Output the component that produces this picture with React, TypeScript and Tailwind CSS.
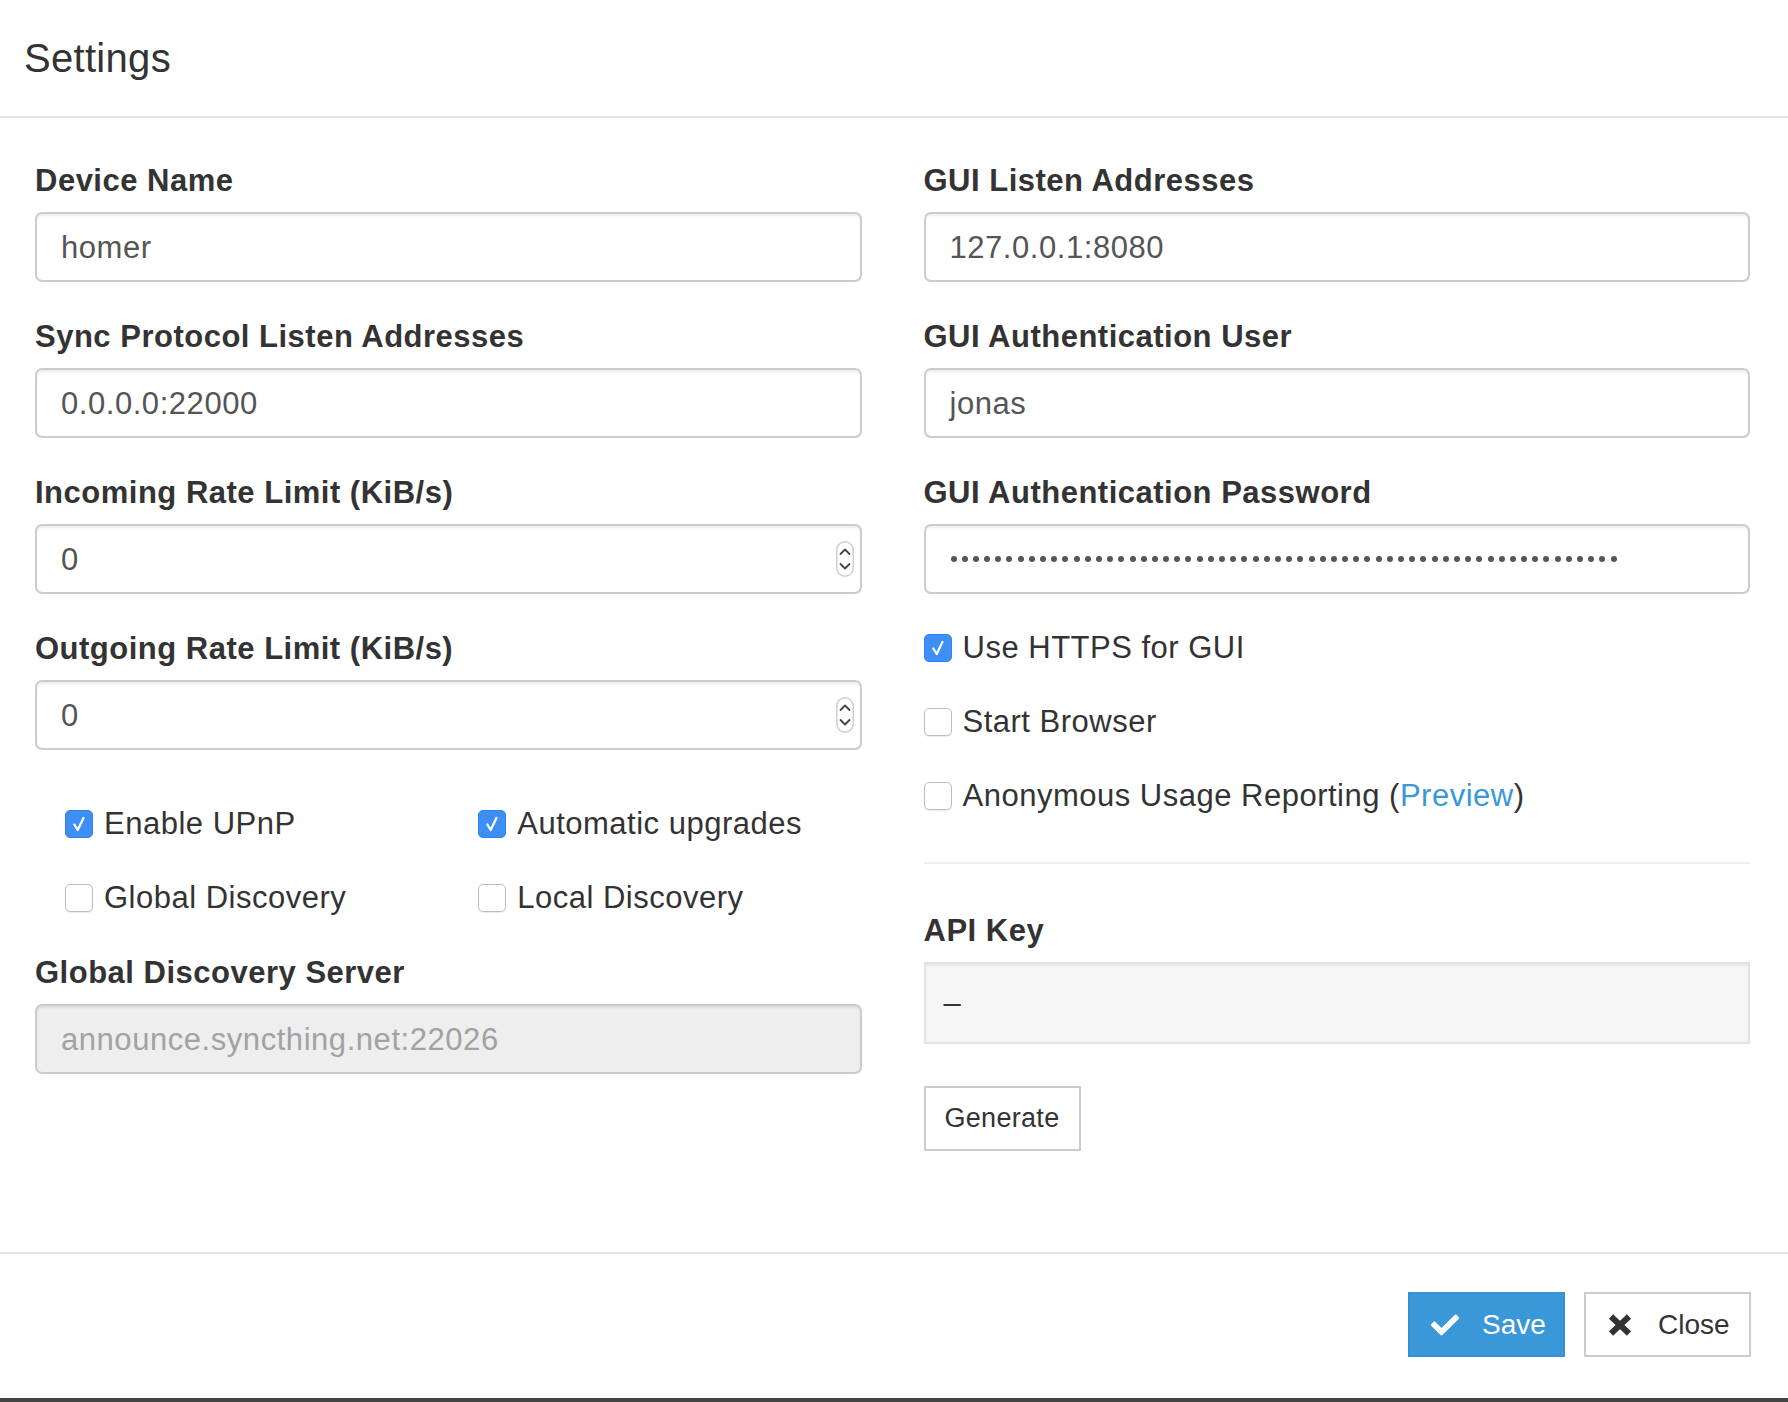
import React from "react";
import { FaCheck } from "react-icons/fa";

const Label = ({ children, className = "" }: { children: React.ReactNode; className?: string }) => (
  <div className={`text-[31px] font-bold leading-[42px] tracking-[0.5px] text-[#333] mb-[10px] ${className}`}>{children}</div>
);

const Spinner = () => (
  <svg width="18" height="36" viewBox="0 0 18 36" className="absolute right-[6px] top-1/2 -translate-y-1/2">
    <rect x="0.75" y="0.75" width="16.5" height="34.5" rx="8.25" fill="#fff" stroke="#cfcfcf" strokeWidth="1.5" />
    <path d="M4.5 13 L9 8.5 L13.5 13" fill="none" stroke="#444" strokeWidth="1.8" strokeLinecap="round" strokeLinejoin="round" />
    <path d="M4.5 23 L9 27.5 L13.5 23" fill="none" stroke="#444" strokeWidth="1.8" strokeLinecap="round" strokeLinejoin="round" />
  </svg>
);

const Input = ({ value, spinner, children }: { value?: string; spinner?: boolean; children?: React.ReactNode }) => (
  <div className="relative h-[70px] rounded-[7px] border-2 border-[#cccccc] bg-white shadow-[inset_0_2px_2px_rgba(0,0,0,0.07)] flex items-center pl-[24px] pt-[3px] text-[31px] tracking-[0.55px] text-[#555]">
    {value}
    {children}
    {spinner && <Spinner />}
  </div>
);

const Group = ({ label, value, spinner, mb = "mb-[34px]" }: { label: string; value: string; spinner?: boolean; mb?: string }) => (
  <div className={mb}>
    <Label>{label}</Label>
    <Input value={value} spinner={spinner} />
  </div>
);

const Box = ({ checked }: { checked: boolean }) =>
  checked ? (
    <span className="w-[28px] h-[28px] rounded-[5px] bg-[#3d8ff5] border border-[#3584ea] flex items-center justify-center shrink-0">
      <svg width="28" height="28" viewBox="0 0 28 28">
        <path d="M9 14.5 L12.6 20.5 L18.8 7.5" fill="none" stroke="#fff" strokeWidth="2.4" strokeLinecap="round" strokeLinejoin="round" />
      </svg>
    </span>
  ) : (
    <span className="w-[28px] h-[28px] rounded-[5px] bg-white border-[1.5px] border-[#bdbdbd] shadow-[0_1px_1px_rgba(0,0,0,0.08)] shrink-0" />
  );

const Check = ({ checked, children, className = "" }: { checked: boolean; children: React.ReactNode; className?: string }) => (
  <div className={`h-[44px] flex items-center gap-[11px] text-[31px] leading-[44px] tracking-[0.5px] text-[#333] ${className}`}>
    <Box checked={checked} />
    <span>{children}</span>
  </div>
);

export default function App() {
  const dots = Array.from({ length: 60 });
  return (
    <div className="w-full h-[1402px] flex flex-col bg-white font-['Liberation_Sans',Arial,sans-serif] text-[#333]">
      <div className="h-[118px] border-b-2 border-[#e5e5e5] pt-[35px] pl-[24px] shrink-0">
        <div className="text-[40px] leading-[46px] tracking-[0.3px] text-[#333]">Settings</div>
      </div>

      <div className="flex-1 grid grid-cols-2 gap-x-[62px] pl-[35px] pr-[38px] pt-[42px] content-start">
        <div className="flex flex-col">
          <Group label="Device Name" value="homer" />
          <Group label="Sync Protocol Listen Addresses" value="0.0.0.0:22000" />
          <Group label="Incoming Rate Limit (KiB/s)" value="0" spinner />
          <Group label="Outgoing Rate Limit (KiB/s)" value="0" spinner mb="mb-[52px]" />
          <div className="grid grid-cols-2 gap-y-[30px]">
            <Check checked className="pl-[30px]">Enable UPnP</Check>
            <Check checked className="pl-[30px]">Automatic upgrades</Check>
            <Check checked={false} className="pl-[30px]">Global Discovery</Check>
            <Check checked={false} className="pl-[30px]">Local Discovery</Check>
          </div>
          <div className="mt-[32px]">
            <Label>Global Discovery Server</Label>
            <div className="h-[70px] rounded-[7px] border-2 border-[#cccccc] bg-[#eeeeee] shadow-[inset_0_2px_2px_rgba(0,0,0,0.07)] flex items-center pl-[24px] pt-[3px] text-[31px] tracking-[0.55px] text-[#a2a2a2]">
              announce.syncthing.net:22026
            </div>
          </div>
        </div>

        <div className="flex flex-col">
          <Group label="GUI Listen Addresses" value="127.0.0.1:8080" />
          <Group label="GUI Authentication User" value="jonas" />
          <div className="mb-[32px]">
            <Label>GUI Authentication Password</Label>
            <Input>
              <div className="flex items-center gap-[5.2px] pl-[1px] -mt-[3px]">
                {dots.map((_, i) => (
                  <span key={i} className="w-[6px] h-[6px] rounded-full bg-[#555]" />
                ))}
              </div>
            </Input>
          </div>
          <div className="flex flex-col gap-y-[30px]">
            <Check checked>Use HTTPS for GUI</Check>
            <Check checked={false}>Start Browser</Check>
            <Check checked={false}>
              Anonymous Usage Reporting (<span className="text-[#3a97d8]">Preview</span>)
            </Check>
          </div>
          <div className="mt-[44px] h-[2px] bg-[#eeeeee]" />
          <Label className="mt-[46px] mb-[9px]">API Key</Label>
          <div className="h-[82px] border-2 border-[#e3e3e3] bg-[#f5f5f5] shadow-[inset_0_2px_2px_rgba(0,0,0,0.05)] flex items-center pl-[18px] text-[31px] text-[#333]">
            –
          </div>
          <div className="mt-[42px]">
            <button className="w-[157px] h-[65px] border-2 border-[#cccccc] bg-white text-[27px] tracking-[0.3px] text-[#333] flex items-center justify-center">
              Generate
            </button>
          </div>
        </div>
      </div>

      <div className="h-[146px] shrink-0 border-t-2 border-[#e5e5e5] pt-[38px] pr-[37px] flex justify-end items-start gap-[19px]">
        <button className="w-[157px] h-[65px] bg-[#3a98d8] border-2 border-[#3690d2] text-white text-[28px] flex items-center pl-[21px] gap-[23px]">
          <FaCheck size={28} />
          <span>Save</span>
        </button>
        <button className="w-[167px] h-[65px] bg-white border-2 border-[#cccccc] text-[#333] text-[28px] flex items-center pl-[22px] gap-[26px]">
          <svg width="24" height="22" viewBox="0 0 24 22">
            <path d="M3 2.5 L21 19.5 M21 2.5 L3 19.5" stroke="#333" strokeWidth="6" strokeLinecap="butt" />
          </svg>
          <span>Close</span>
        </button>
      </div>
      <div className="h-[4px] shrink-0 bg-[#444444]" />
    </div>
  );
}
